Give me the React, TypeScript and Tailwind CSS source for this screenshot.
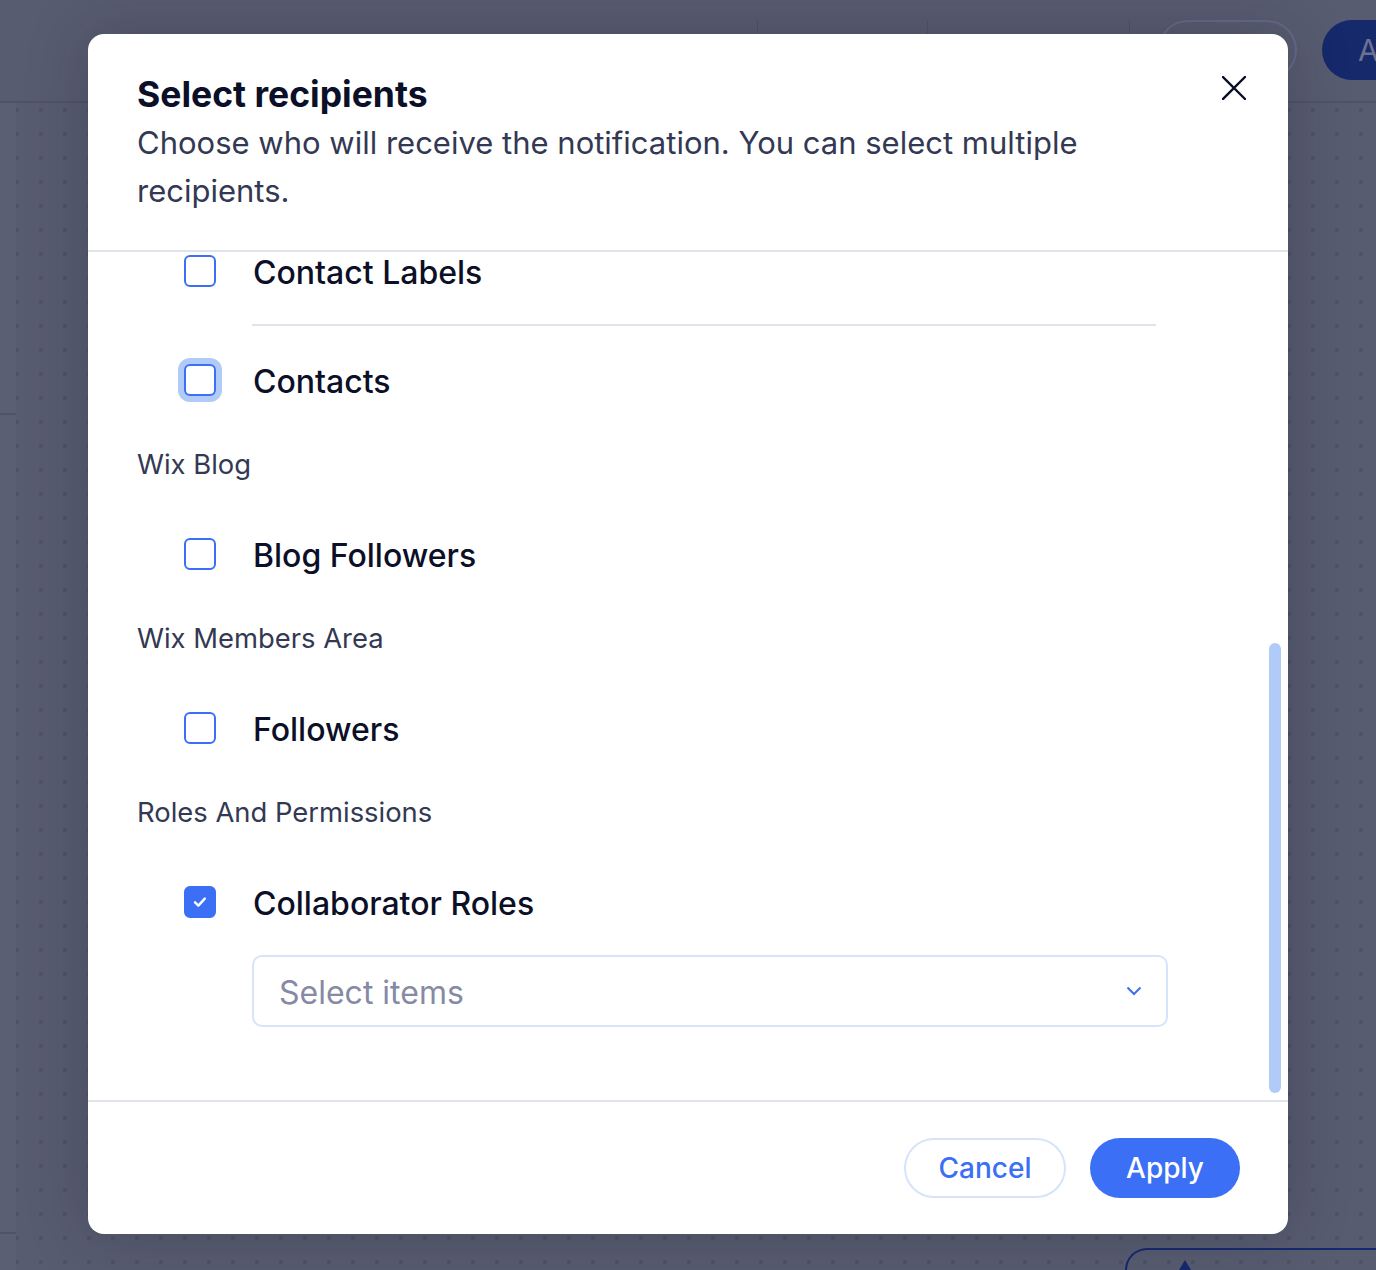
import React, { useState } from 'react';

type Row =
  | { kind: 'section'; label: string }
  | { kind: 'option'; id: string; label: string };

const rows: Row[] = [
  { kind: 'section', label: 'Wix Blog' },
  { kind: 'option', id: 'blog-followers', label: 'Blog Followers' },
  { kind: 'section', label: 'Wix Members Area' },
  { kind: 'option', id: 'followers', label: 'Followers' },
  { kind: 'section', label: 'Roles And Permissions' },
  { kind: 'option', id: 'collaborator-roles', label: 'Collaborator Roles' },
];

function Checkbox({
  checked,
  focused,
  onToggle,
}: {
  checked: boolean;
  focused?: boolean;
  onToggle: () => void;
}) {
  return (
    <button
      type="button"
      onClick={onToggle}
      className={`flex h-8 w-8 shrink-0 items-center justify-center rounded-[6px] border-2 border-[#3a6ff6] ${
        checked ? 'bg-[#3a6ff6]' : 'bg-white'
      } ${focused ? 'ring-[6px] ring-[#b1cbf8]' : ''}`}
    >
      {checked && (
        <svg width="18" height="18" viewBox="0 0 18 18" fill="none">
          <path d="M4 9.3 7.4 12.6 13.8 5.6" stroke="white" strokeWidth="2.4" strokeLinecap="round" strokeLinejoin="round" />
        </svg>
      )}
    </button>
  );
}

function OptionRow({
  label,
  checked,
  focused,
  onToggle,
}: {
  label: string;
  checked: boolean;
  focused?: boolean;
  onToggle: () => void;
}) {
  return (
    <div className="flex h-[38px] items-center pl-[96px]">
      <Checkbox checked={checked} focused={focused} onToggle={onToggle} />
      <span className="ml-[37px] pt-[4px] text-[32px] font-medium leading-[38px] text-[#0b0f27]">{label}</span>
    </div>
  );
}

export default function App() {
  const [checked, setChecked] = useState<Record<string, boolean>>({
    'collaborator-roles': true,
  });
  const toggle = (id: string) => setChecked((c) => ({ ...c, [id]: !c[id] }));

  return (
    <div
      className="relative h-[1270px] w-[1376px] overflow-hidden bg-[#585c70]"
      style={{ fontFamily: 'Inter, "Noto Sans", sans-serif' }}
    >
      {/* Dimmed page behind the dialog */}
      <div className="flex h-full flex-col">
        <div className="flex h-[103px] shrink-0 items-start border-b-2 border-[#4f5366] pt-5">
          <div className="flex-1" />
          <div className="h-[60px] w-px bg-[#4f5366]" />
          <div className="w-[169px]" />
          <div className="h-[60px] w-px bg-[#4f5366]" />
          <div className="w-[201px]" />
          <div className="h-[60px] w-px bg-[#4f5366]" />
          <div className="ml-[28px] h-[60px] w-[139px] rounded-full border-2 border-[#65698a]" />
          <div className="ml-[25px] flex h-[60px] w-[54px] items-center overflow-hidden rounded-l-full bg-[#15296b] pl-[36px] text-[30px] text-[#6c7190]">
            A
          </div>
        </div>
        <div className="flex flex-1">
          <div className="flex w-4 shrink-0 flex-col bg-[#5b5f73]">
            <div className="h-[312px] border-b-2 border-[#4f5366]" />
            <div className="h-[819px] border-b-2 border-[#4f5366]" />
          </div>
          <div className="flex flex-1 flex-col justify-end overflow-hidden bg-[radial-gradient(circle,#4f5366_2px,transparent_2.6px)] bg-size-[24px_24px] bg-position-[13px_19px]">
            <div className="ml-auto flex h-[22px] w-[251px] items-end rounded-tl-[44px] border-l-2 border-t-2 border-[#17296e] pl-[52px]">
              <div className="h-0 w-0 border-x-[6px] border-b-[10px] border-x-transparent border-b-[#17296e]" />
            </div>
          </div>
        </div>
      </div>

      {/* Dialog */}
      <div className="absolute left-[88px] top-[34px] flex h-[1200px] w-[1200px] flex-col overflow-hidden rounded-[16px] bg-white shadow-[0_0_60px_rgba(20,24,40,0.25)]">
        <div className="relative shrink-0 border-b-2 border-[#dfe5eb] pb-[35px] pl-[49px] pr-[150px] pt-[41px]">
          <h2 className="text-[35.5px] font-bold leading-[40px] text-[#0b0f27]">Select recipients</h2>
          <p className="mt-[4px] text-[31px] leading-[48px] text-[#333853]">
            Choose who will receive the notification. You can select multiple recipients.
          </p>
          <button type="button" className="absolute right-[42px] top-[42px] h-6 w-6">
            <svg width="24" height="24" viewBox="0 0 24 24" fill="none">
              <path d="M1 1 23 23M23 1 1 23" stroke="#0b0f27" strokeWidth="2.4" strokeLinecap="square" />
            </svg>
          </button>
        </div>

        <div className="relative flex-1 overflow-hidden">
          <div className="flex flex-col">
            <OptionRow
              label="Contact Labels"
              checked={!!checked['contact-labels']}
              onToggle={() => toggle('contact-labels')}
            />
            <div className="ml-[164px] mr-[132px] mt-[34px] h-[2px] bg-[#dfe5eb]" />
            <div className="mt-[35px]">
              <OptionRow
                label="Contacts"
                focused
                checked={!!checked['contacts']}
                onToggle={() => toggle('contacts')}
              />
            </div>
            {rows.map((r) =>
              r.kind === 'section' ? (
                <div key={r.label} className="mt-[47px] pl-[49px] text-[27.4px] leading-[36px] text-[#333853]">
                  {r.label}
                </div>
              ) : (
                <div key={r.id} className="mt-[53px]">
                  <OptionRow label={r.label} checked={!!checked[r.id]} onToggle={() => toggle(r.id)} />
                </div>
              )
            )}
            <div className="ml-[164px] mr-[120px] mt-[34px] flex h-[72px] items-center justify-between rounded-[10px] border-2 border-[#d6e4fb] pl-[25px] pr-[24px]">
              <span className="pt-[3px] text-[32px] text-[#868aa5]">Select items</span>
              <svg width="16" height="10" viewBox="0 0 16 10" fill="none">
                <path d="M1.5 1.5 8 8 14.5 1.5" stroke="#3a6ff6" strokeWidth="2" />
              </svg>
            </div>
          </div>
          <div className="absolute right-[7px] top-[391px] h-[450px] w-3 rounded-full bg-[#b1cbf8]" />
        </div>

        <div className="flex h-[134px] shrink-0 items-center justify-end gap-6 border-t-2 border-[#dfe5eb] pr-[48px]">
          <button
            type="button"
            className="h-[60px] w-[162px] rounded-full border-2 border-[#d6e4fb] text-[28px] font-medium text-[#3a6ff6]"
          >
            Cancel
          </button>
          <button type="button" className="h-[60px] w-[150px] rounded-full bg-[#3a6ff6] text-[28px] font-medium text-white">
            Apply
          </button>
        </div>
      </div>
    </div>
  );
}
